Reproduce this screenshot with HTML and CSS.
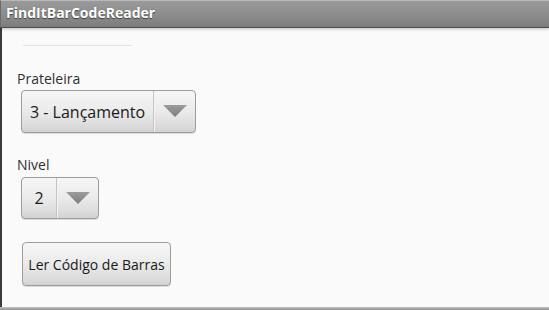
FILE: index.html
```html
<!DOCTYPE html>
<html lang="pt">
<head>
<meta charset="utf-8">
<title>FindItBarCodeReader</title>
<link rel="stylesheet" href="styles.css">
</head>
<body>
<div class="screen">
  <header class="titlebar"><span class="title">FindItBarCodeReader</span></header>
  <main class="content">
    <div class="edit-line"></div>
    <div class="label label-first">Prateleira</div>
    <div class="spinner spinner-wide">
      <span class="spinner-value">3 - Lançamento</span>
      <span class="spinner-arrow">
        <svg width="24" height="12" viewBox="0 0 24 12"><defs><linearGradient id="tg1" x1="0" y1="0" x2="0" y2="1"><stop offset="0" stop-color="#9c9c9c"/><stop offset="1" stop-color="#7c7c7c"/></linearGradient></defs><polygon points="0,0 24,0 12,12" fill="url(#tg1)"/></svg>
      </span>
    </div>
    <div class="label label-next">Nivel</div>
    <div class="spinner spinner-narrow">
      <span class="spinner-value spinner-value-center">2</span>
      <span class="spinner-arrow">
        <svg width="24" height="12" viewBox="0 0 24 12"><defs><linearGradient id="tg2" x1="0" y1="0" x2="0" y2="1"><stop offset="0" stop-color="#9c9c9c"/><stop offset="1" stop-color="#7c7c7c"/></linearGradient></defs><polygon points="0,0 24,0 12,12" fill="url(#tg2)"/></svg>
      </span>
    </div>
    <button class="button" type="button">Ler Código de Barras</button>
  </main>
  <footer class="bottom-strip"></footer>
</div>
</body>
</html>
```
FILE: styles.css
```css
* { box-sizing: border-box; }
html, body { margin: 0; padding: 0; }
body {
  width: 549px;
  height: 310px;
  overflow: hidden;
  background: #fafafa;
  font-family: "Open Sans", "DejaVu Sans", sans-serif;
}
.screen {
  width: 549px;
  height: 310px;
  display: flex;
  flex-direction: column;
}
.titlebar {
  height: 28px;
  flex: none;
  border-top: 1px solid #b8b8b8;
  border-bottom: 1px solid #4e4e4e;
  border-left: 1px solid #6a6a6a;
  background: linear-gradient(#9a9a9a, #8a8a8a 60%, #7c7c7c);
  box-shadow: 0 1px 3px rgba(0,0,0,0.25);
  padding-left: 5px;
  position: relative;
  z-index: 1;
}
.title {
  display: block;
  color: #ffffff;
  font-weight: 700;
  font-size: 14px;
  line-height: 22px;
  margin-top: 1px;
  text-shadow: 0 1px 1px rgba(0,0,0,0.55);
}
.content {
  flex: 1;
  border-left: 2px solid #3a3a3a;
  padding-left: 15px;
  display: flex;
  flex-direction: column;
  align-items: flex-start;
  background: #fafafa;
}
.edit-line {
  margin-top: 17px;
  margin-left: 6px;
  width: 109px;
  height: 1px;
  background: #e2e2e2;
}
.label {
  font-size: 14px;
  line-height: 19px;
  color: #303030;
}
.label-first { margin-top: 23px; }
.label-next { margin-top: 22px; }
.spinner {
  display: flex;
  align-items: stretch;
  margin-left: 4px;
  border: 1px solid #9c9c9c;
  border-radius: 4px;
  background: linear-gradient(#f6f6f6, #ececec 45%, #dcdcdc 85%, #d2d2d2);
  box-shadow: 0 1px 0 rgba(0,0,0,0.12);
}
.spinner-wide { margin-top: 2px; width: 175px; height: 43px; }
.spinner-narrow { margin-top: 3px; width: 78px; height: 42px; }
.spinner-value {
  flex: 1;
  display: flex;
  align-items: center;
  padding-left: 8px;
  font-size: 16px;
  line-height: 22px;
  color: #1a1a1a;
  border-right: 1px solid #c4c4c4;
  white-space: nowrap;
}
.spinner-value-center { justify-content: center; padding-left: 0; }
.spinner-arrow {
  width: 41px;
  flex: none;
  display: flex;
  align-items: center;
  justify-content: center;
  border-left: 1px solid #f4f4f4;
  padding-bottom: 1px;
}
.spinner-arrow svg { display: block; }
.button {
  margin-top: 23px;
  margin-left: 5px;
  width: 149px;
  height: 44px;
  padding: 0;
  border: 1px solid #9c9c9c;
  border-radius: 4px;
  background: linear-gradient(#f6f6f6, #ececec 45%, #dcdcdc 85%, #d2d2d2);
  box-shadow: 0 1px 0 rgba(0,0,0,0.12);
  font-family: "Open Sans", "DejaVu Sans", sans-serif;
  font-size: 14px;
  color: #1a1a1a;
  line-height: 19px;
}
.bottom-strip {
  height: 3px;
  flex: none;
  background: linear-gradient(#c4c4c4, #8c8c8c);
}
```
